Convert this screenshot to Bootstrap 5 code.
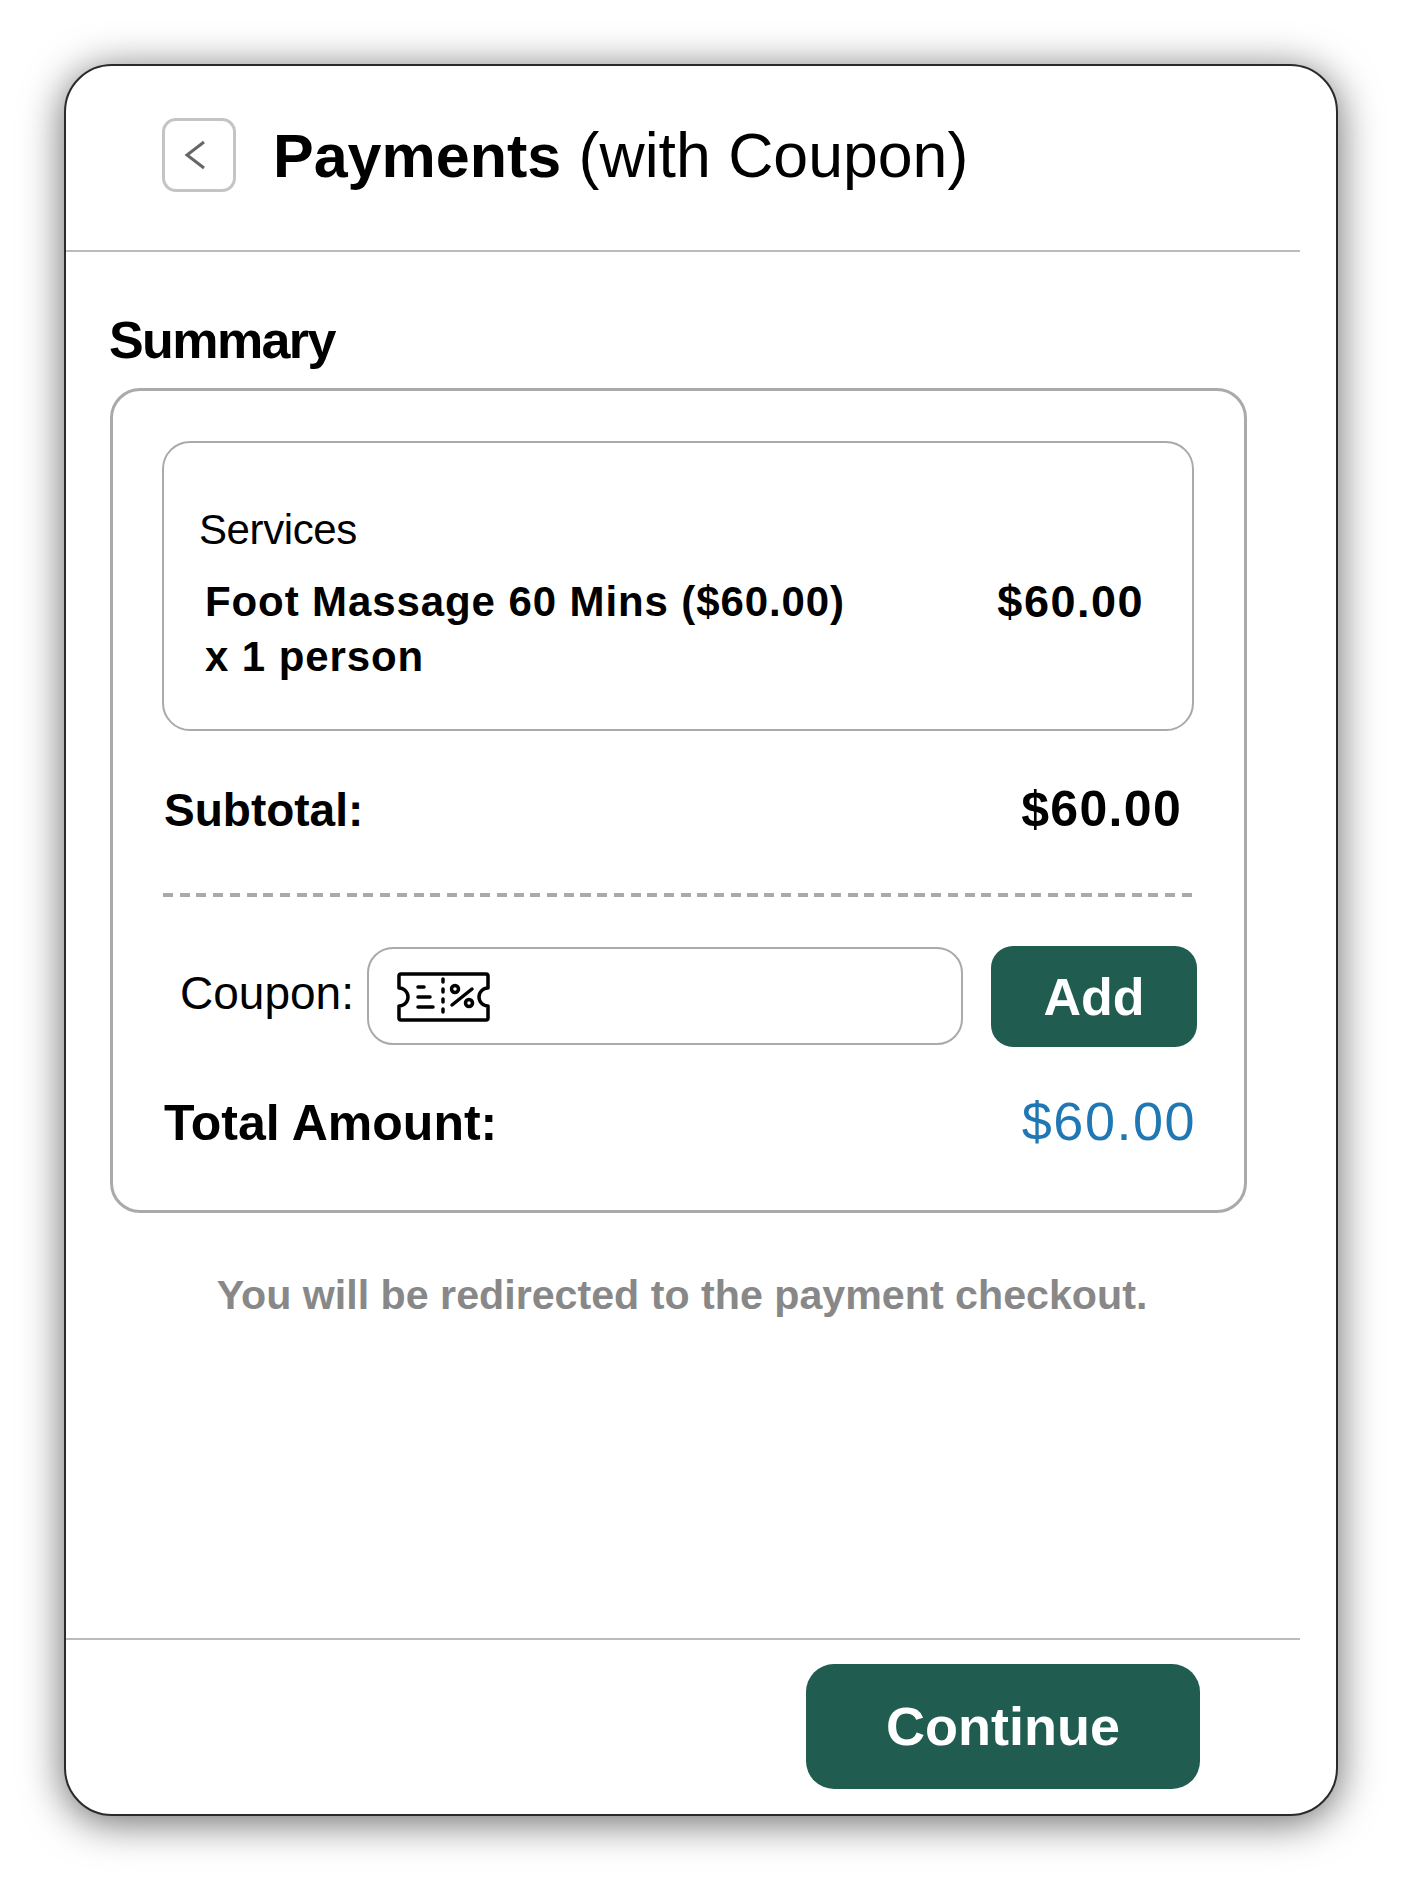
<!DOCTYPE html>
<html lang="en">
<head>
  <meta charset="UTF-8" />
  <meta name="viewport" content="width=device-width, initial-scale=1" />
  <title>Payments (with Coupon)</title>
  <link href="https://cdn.jsdelivr.net/npm/bootstrap@5.3.0/dist/css/bootstrap.min.css" rel="stylesheet">
  <style>
    body {
      background: #fff;
      font-family: "Liberation Sans", Arial, sans-serif;
      color: #000;
      padding: 64px;
    }
    .screen {
      height: 1752px;
      border: 2px solid #2a2a2a;
      border-radius: 48px;
      background: #fff;
      box-shadow: 0 6px 42px rgba(0, 0, 0, .6);
    }
    .top-bar {
      height: 186px;
      margin-right: 36px;
      padding-left: 96px;
      padding-bottom: 6px;
      border-bottom: 2px solid #bbb;
      gap: 37px;
    }
    .back-btn {
      width: 74px;
      height: 74px;
      padding: 0 8px 0 0;
      border: 3px solid #c4c4c4;
      border-radius: 14px;
      background: #fff;
    }
    .page-title {
      font-size: 62.6px;
      line-height: 1;
      font-weight: 400;
      margin: 0;
    }
    .page-title b {
      font-size: 61px;
    }
    .summary-wrap {
      padding: 0 0 0 43px;
      width: 1181px;
    }
    .summary-title {
      font-size: 52px;
      font-weight: 700;
      letter-spacing: -1.6px;
      line-height: 60px;
      margin: 58px 0 18px;
    }
    .summary-box {
      height: 825px;
      margin-left: 1px;
      padding: 50px 42px 0 49px;
      border: 3px solid #aaa;
      border-radius: 30px;
    }
    .service-box {
      height: 290px;
      padding: 62px 48px 0 35px;
      margin-right: 8px;
      border: 2px solid #aaa;
      border-radius: 28px;
    }
    .service-label {
      font-size: 42px;
      line-height: 50px;
      letter-spacing: -.4px;
    }
    .service-line {
      font-size: 42px;
      line-height: 55px;
      font-weight: 700;
      letter-spacing: .9px;
      padding-left: 6px;
      margin-top: 19px;
    }
    .service-price {
      font-size: 45px;
      letter-spacing: 1.5px;
    }
    .sum-row {
      font-size: 46px;
      font-weight: 700;
      line-height: 56px;
      margin-top: 50px;
      padding: 0 20px 0 2px;
    }
    .sum-price {
      font-size: 50px;
      letter-spacing: 1.3px;
    }
    .dash-line {
      height: 4px;
      margin: 55px 4px 47px 1px;
      background: repeating-linear-gradient(to right, #aaa 0 10px, transparent 10px 16.7px);
    }
    .coupon-label {
      font-size: 46px;
      line-height: 1;
      width: 205px;
      padding: 0 0 6px 18px;
    }
    .coupon-field {
      width: 596px;
      height: 98px;
      border: 2px solid #aaa;
      border-radius: 26px;
      padding-left: 28px;
    }
    .coupon-field svg {
      margin-top: 2px;
    }
    .btn-green {
      background: #205c50;
      color: #fff;
      border: 0;
      font-weight: 700;
    }
    .btn-green:hover {
      background: #205c50;
      color: #fff;
    }
    .add-btn {
      width: 206px;
      height: 101px;
      margin: 2px 5px 0 0;
      font-size: 52px;
      border-radius: 22px;
      padding: 0;
    }
    .total-row {
      font-size: 50px;
      font-weight: 700;
      line-height: 60px;
      margin-top: 44px;
      padding-left: 2px;
      margin-right: 6px;
    }
    .total-price {
      color: #1f77b4;
      font-size: 54px;
      font-weight: 400;
      letter-spacing: 1.5px;
    }
    .redirect-note {
      color: #888;
      font-size: 41.2px;
      font-weight: 700;
      line-height: 50px;
      text-align: center;
      margin: 57px 0 0 8px;
    }
    .bottom-bar {
      margin-right: 36px;
      border-top: 2px solid #bbb;
      padding: 24px 100px 0 0;
    }
    .continue-btn {
      width: 394px;
      height: 125px;
      margin-bottom: 25px;
      font-size: 54px;
      border-radius: 28px;
      padding: 0;
    }
  </style>
</head>
<body>

  <div class="screen d-flex flex-column">

    <div class="top-bar d-flex align-items-center flex-shrink-0">
      <button class="back-btn d-flex align-items-center justify-content-center" type="button" aria-label="Back">
        <svg width="22" height="30" viewBox="0 0 22 30" fill="none" stroke="#666" stroke-width="3">
          <path d="M20 2 L3 15 L20 28"/>
        </svg>
      </button>
      <h1 class="page-title"><b>Payments</b> (with Coupon)</h1>
    </div>

    <div class="summary-wrap">
      <h2 class="summary-title">Summary</h2>

      <div class="summary-box">
        <div class="service-box">
          <div class="service-label">Services</div>
          <div class="service-line d-flex justify-content-between">
            <div>Foot Massage 60 Mins ($60.00)<br>x 1 person</div>
            <div class="service-price">$60.00</div>
          </div>
        </div>

        <div class="sum-row d-flex justify-content-between align-items-baseline">
          <span>Subtotal:</span>
          <span class="sum-price">$60.00</span>
        </div>

        <div class="dash-line"></div>

        <div class="d-flex align-items-center">
          <div class="coupon-label">Coupon:</div>
          <div class="coupon-field d-flex align-items-center">
            <svg width="93" height="50" viewBox="0 0 93 50" fill="none" stroke="#000" stroke-width="3.5" stroke-linecap="round" stroke-linejoin="round">
              <path d="M2 4 Q2 2 4 2 H89 Q91 2 91 4 V16 A9 9 0 0 0 91 34 V46 Q91 48 89 48 H4 Q2 48 2 46 V34 A9 9 0 0 0 2 16 Z"/>
              <path d="M21 15 H27 M21 25 H33 M21 35 H36"/>
              <path d="M46 7 V44" stroke-dasharray="3 7"/>
              <circle cx="58" cy="17" r="3.5"/>
              <circle cx="72" cy="31" r="3.5"/>
              <path d="M55 33 L75 17"/>
            </svg>
          </div>
          <button class="btn btn-green add-btn ms-auto" type="button">Add</button>
        </div>

        <div class="total-row d-flex justify-content-between align-items-baseline">
          <span>Total Amount:</span>
          <span class="total-price">$60.00</span>
        </div>
      </div>

      <div class="redirect-note">You will be redirected to the payment checkout.</div>
    </div>

    <div class="bottom-bar mt-auto d-flex justify-content-end">
      <button class="btn btn-green continue-btn" type="button">Continue</button>
    </div>

  </div>

  <script src="https://cdn.jsdelivr.net/npm/bootstrap@5.3.0/dist/js/bootstrap.bundle.min.js"></script>
</body>
</html>
